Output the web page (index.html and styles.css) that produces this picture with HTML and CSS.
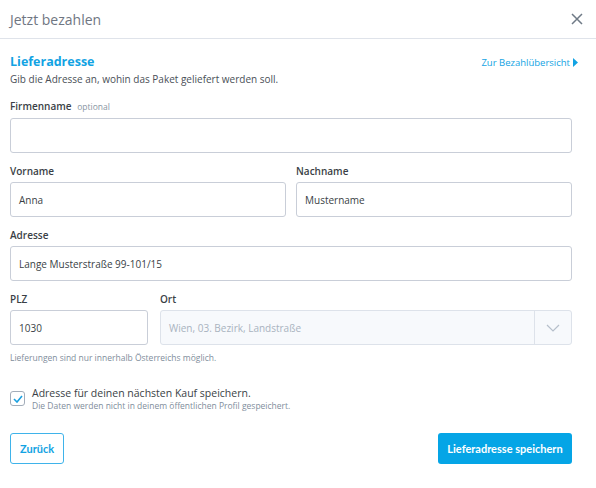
FILE: index.html
```html
<!DOCTYPE html>
<html lang="de">
<head>
<meta charset="utf-8">
<title>Jetzt bezahlen</title>
<link rel="stylesheet" href="styles.css">
</head>
<body>
<div class="modal">
  <header class="header">
    <span class="header-title">Jetzt bezahlen</span>
    <svg class="close" width="12" height="12" viewBox="0 0 12 12"><path d="M1 1L11 11M11 1L1 11" stroke="#6f7a86" stroke-width="1.5" fill="none"/></svg>
  </header>
  <main class="content">
    <div class="head-row">
      <h1 class="title">Lieferadresse</h1>
      <a class="overview-link">Zur Bezahlübersicht <svg width="6" height="9" viewBox="0 0 6 9"><path d="M0 0L5 4.5L0 9Z" fill="#12a3e3"/></svg></a>
    </div>
    <p class="subtitle">Gib die Adresse an, wohin das Paket geliefert werden soll.</p>

    <div class="field gap-first">
      <label class="label">Firmenname <span class="optional">optional</span></label>
      <div class="input"></div>
    </div>

    <div class="row">
      <div class="field col">
        <label class="label">Vorname</label>
        <div class="input">Anna</div>
      </div>
      <div class="field col">
        <label class="label">Nachname</label>
        <div class="input">Mustername</div>
      </div>
    </div>

    <div class="field">
      <label class="label">Adresse</label>
      <div class="input">Lange Musterstraße 99-101/15</div>
    </div>

    <div class="row row-plz">
      <div class="field plz">
        <label class="label">PLZ</label>
        <div class="input">1030</div>
      </div>
      <div class="field col">
        <label class="label">Ort</label>
        <div class="input select disabled">
          <span class="select-value">Wien, 03. Bezirk, Landstraße</span>
          <span class="select-arrow"><svg width="14" height="8" viewBox="0 0 14 8"><path d="M1 1L7 7L13 1" stroke="#b6bfcb" stroke-width="1.2" fill="none"/></svg></span>
        </div>
      </div>
    </div>
    <p class="hint">Lieferungen sind nur innerhalb Österreichs möglich.</p>

    <div class="check-row">
      <span class="checkbox"><svg width="10" height="8" viewBox="0 0 10 8"><path d="M1 4L4 7L9 1" stroke="#1aa0e0" stroke-width="1.6" fill="none"/></svg></span>
      <div class="check-text">
        <div class="check-main">Adresse für deinen nächsten Kauf speichern.</div>
        <div class="check-sub">Die Daten werden nicht in deinem öffentlichen Profil gespeichert.</div>
      </div>
    </div>

    <div class="actions">
      <button class="btn btn-outline">Zurück</button>
      <button class="btn btn-primary">Lieferadresse speichern</button>
    </div>
  </main>
</div>
</body>
</html>
```
FILE: styles.css
```css
* { box-sizing: border-box; }
html, body { margin: 0; padding: 0; background: #fff; }
body { font-family: "Open Sans", "Noto Sans", sans-serif; color: #3a3f46; }

.header {
  height: 39px;
  border-bottom: 1px solid #dfe3ea;
  display: flex;
  align-items: center;
  justify-content: space-between;
  padding: 0 13px 0 10px;
}
.header-title { font-size: 14px; color: #6f7682; }
.close { display: block; }

.content { padding: 0 24px 0 10px; }

.head-row {
  margin-top: 14px;
  display: flex;
  justify-content: space-between;
  align-items: center;
  height: 18px;
}
.title { margin: 0; font-size: 12.5px; font-weight: 700; color: #12a3e3; line-height: 18px; }
.overview-link { font-size: 9.5px; color: #12a3e3; margin-right: -7px; display: flex; align-items: center; gap: 3px; }

.subtitle { margin: 1px 0 0; font-size: 10px; line-height: 14px; color: #4a4f57; }

.field { display: flex; flex-direction: column; margin-top: 11px; }
.gap-first { margin-top: 13px; }
.label { font-size: 10px; font-weight: 600; line-height: 14px; color: #3a3f46; margin-bottom: 4px; }
.optional { font-size: 8.5px; font-weight: 400; color: #8a96a3; margin-left: 3px; }

.input {
  height: 35px;
  border: 1px solid #c9ced8;
  border-radius: 3px;
  padding: 0 8px;
  display: flex;
  align-items: center;
  font-size: 10px;
  color: #3a3f46;
  background: #fff;
}

.row { display: flex; gap: 10px; }
.col { flex: 1; }
.plz { width: 138px; margin-right: 2px; }

.select { padding: 0 0 0 8px; }
.disabled { background: #f7f9fc; border-color: #dde2ea; color: #a9b3bf; }
.select-value { flex: 1; }
.select-arrow {
  width: 37px;
  align-self: stretch;
  border-left: 1px solid #dde2ea;
  display: flex;
  align-items: center;
  justify-content: center;
}

.hint { margin: 7px 0 0; font-size: 8.5px; line-height: 12px; color: #7f8e9c; }

.check-row { display: flex; gap: 7px; margin-top: 22px; align-items: flex-start; }
.checkbox {
  width: 15px; height: 15px;
  border: 1px solid #a3adba;
  border-radius: 3px;
  margin-top: 5px;
  display: flex; align-items: center; justify-content: center;
  flex: none;
}
.check-main { font-size: 10.5px; line-height: 14px; color: #3a3f46; }
.check-sub { font-size: 8.5px; line-height: 12px; color: #7f8e9c; }

.actions { display: flex; justify-content: space-between; margin-top: 21px; }
.btn {
  height: 31px;
  border-radius: 3px;
  font-family: "Lato", "Open Sans", sans-serif;
  font-weight: 700;
  font-size: 11px;
  cursor: pointer;
}
.btn-outline { background: #fff; border: 1px solid #3fb3ea; color: #12a3e3; padding: 0 9px; width: 54px; }
.btn-primary { background: #05a5e6; border: none; color: #fff; width: 134px; }
```
